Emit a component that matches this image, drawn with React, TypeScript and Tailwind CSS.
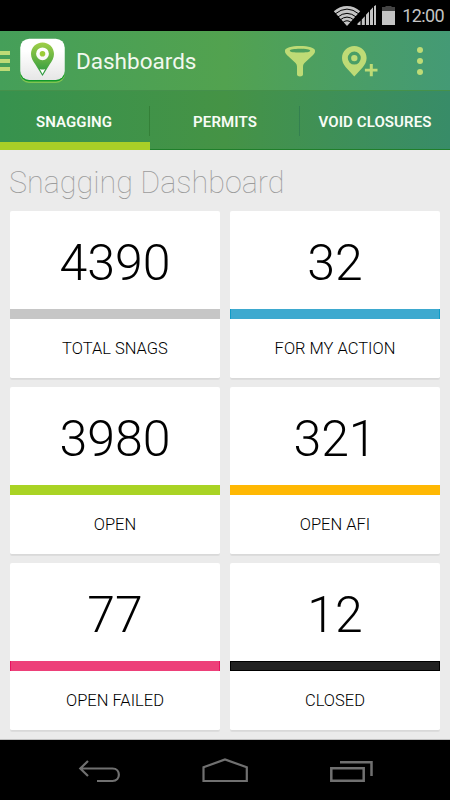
import type { ReactNode } from "react";

type Stat = {
  value: string;
  label: string;
  bar: string;
};

const stats: Stat[] = [
  { value: "4390", label: "TOTAL SNAGS", bar: "bg-[#c6c6c6]" },
  { value: "32", label: "FOR MY ACTION", bar: "bg-[#3da9cf] border-x border-[#0e9bc8]" },
  { value: "3980", label: "OPEN", bar: "bg-[#a9d324]" },
  { value: "321", label: "OPEN AFI", bar: "bg-[#ffb803]" },
  { value: "77", label: "OPEN FAILED", bar: "bg-[#ed4079] border-x border-[#e6125f]" },
  { value: "12", label: "CLOSED", bar: "bg-[#222222] border border-black" },
];

function StatusBar() {
  return (
    <div className="flex h-[31px] items-start justify-end bg-black pr-[6px] text-[#c4c4c4]">
      <svg className="mt-[5px] h-[21px] w-[44px]" viewBox="0 0 44 21" fill="currentColor">
        <path d="M0.8 6.2C8.5-0.8 19.5-0.8 27.2 6.2L14 21Z" />
        <g fill="none" stroke="#000" strokeWidth="1">
          <path d="M2 9Q14 -0.8 26 9" />
          <path d="M4.5 12.2Q14 4.5 23.5 12.2" />
          <path d="M7 15Q14 9.2 21 15" />
          <path d="M9.8 17.5Q14 14 18.2 17.500" />
        </g>
        <path d="M24.5 20v-1.5l3-2.8V20zM28.800 20v-5.600l3-3.200V20zM33 20V9.800l3-3.200V20zM37 20V5.500l3-3.200V20zM41 20V1.300L43 0v20z" />
      </svg>
      <svg className="mt-[6px] ml-[5px] h-[19px] w-[13px]" viewBox="0 0 13 19">
        <path fill="#444" d="M0 1h3.5V0h6v1H13v4H0z" />
        <path fill="#c4c4c4" d="M0 5h13v14H0z" />
      </svg>
      <span className="ml-[7px] pt-[4px] text-[18px] leading-[24px] tracking-[-0.6px]">12:00</span>
    </div>
  );
}

function AppLogo() {
  return (
    <svg className="ml-[9px] h-[46px] w-[47px]" viewBox="0 0 47 46">
      <defs>
        <linearGradient id="tile" x1="0" y1="0" x2="0" y2="1">
          <stop offset="0.3" stopColor="#fff" />
          <stop offset="1" stopColor="#e6e6e6" />
        </linearGradient>
        <linearGradient id="pin" x1="0" y1="0" x2="0" y2="1">
          <stop offset="0" stopColor="#a0cf48" />
          <stop offset="1" stopColor="#26963f" />
        </linearGradient>
      </defs>
      <rect x="1" y="4" width="45" height="41" rx="9" fill="#7fc452" />
      <rect x="1" y="1" width="45" height="42.5" rx="9" fill="#10992a" />
      <rect x="1.2" y="0.7" width="44.6" height="41.3" rx="9" fill="url(#tile)" />
      <path
        fill="url(#pin)"
        fillRule="evenodd"
        d="M23.5 4.5C17 4.5 12 9.5 12 16c0 4 2 7 4.400 10.500L23.500 38l7.100-11.500C33 23 35 20 35 16c0-6.500-5-11.500-11.500-11.500zM23.500 9.400a6.400 6.400 0 1 1 0 12.800a6.400 6.400 0 0 1 0-12.800z"
      />
      <circle cx="23.500" cy="15.800" r="2.800" fill="#9bcc38" />
      <path fill="#fff" d="M20.800 31q2.700 1.200 5.400 0L23.500 36z" />
    </svg>
  );
}

function ActionBar() {
  return (
    <header className="flex h-[59px] items-start bg-linear-to-r from-[#459f59] via-[#52a24f] to-[#449a75] pr-[27px] text-[#bedb76]">
      <div className="mt-[20px] flex w-[10px] flex-col gap-[4px]">
        <span className="h-[4px] bg-current" />
        <span className="h-[4px] bg-current" />
        <span className="h-[4px] bg-current" />
      </div>
      <div className="mt-[7px]">
        <AppLogo />
      </div>
      <h1 className="mt-[14px] ml-[10px] flex-1 text-[22.5px] leading-[32px] text-[#f1f8ee]">Dashboards</h1>
      <svg className="mt-[15px] h-[31px] w-[30px]" viewBox="0 0 30 31" fill="currentColor">
        <path
          fillRule="evenodd"
          d="M15 0C6.500 0 0 1.800 0 4.500v1c0 1.500 1.500 3 3 4.500l7 6.500c1.500 1.400 2 2.500 2 4.500v7.500c0 2.500 6 2.500 6 0V21c0-2 .5-3.100 2-4.500l7-6.500c1.500-1.500 3-3 3-4.500v-1C30 1.800 23.500 0 15 0zm0 2.800c5.700 0 10.200.7 10.200 1.900S20.700 6.600 15 6.600 4.800 5.900 4.800 4.700 9.300 2.800 15 2.800z"
        />
      </svg>
      <svg className="mt-[15px] ml-[27px] h-[31px] w-[36px]" viewBox="0 0 36 31" fill="currentColor">
        <path
          fillRule="evenodd"
          d="M12.300 0C5.500 0 0 5.300 0 12c0 3.500 1.500 6.500 3.800 9.200L12.300 30.500l8.500-9.300c2.300-2.700 3.800-5.700 3.800-9.200C24.600 5.300 19.100 0 12.300 0zm0 5.600a6.500 6.500 0 1 1 0 13a6.500 6.500 0 0 1 0-13z"
        />
        <circle cx="12.300" cy="12.100" r="3.200" />
        <path d="M27.800 18h3v4.700h4.700v2.700h-4.700v4.800h-3v-4.800h-4.900v-2.700h4.900z" />
      </svg>
      <div className="mt-[16px] ml-[39px] flex flex-col items-center gap-[5px]">
        <span className="size-[6px] rounded-full bg-current" />
        <span className="size-[6px] rounded-full bg-current" />
        <span className="size-[6px] rounded-full bg-current" />
      </div>
    </header>
  );
}

function Tab({ active, children }: { active?: boolean; children: ReactNode }) {
  return (
    <div
      className={
        active
          ? "flex h-full w-[150px] items-center justify-center border-b-8 border-[#a9cf27] pt-[12px] pr-[2px]"
          : "flex h-full w-[150px] items-center justify-center border-b border-[#1f7f2a] pt-[5px]"
      }
    >
      {children}
    </div>
  );
}

function Tabs() {
  return (
    <nav className="relative flex h-[60px] border-t border-[#45914b] bg-linear-to-r from-[#37924e] via-[#459345] to-[#388c68] text-[15px] font-semibold tracking-[0.1px] text-[#f8fcf6]">
      <Tab active>SNAGGING</Tab>
      <Tab>PERMITS</Tab>
      <Tab>VOID CLOSURES</Tab>
      <span className="absolute top-[15px] left-[149px] h-[30px] w-px bg-[#348038]" />
      <span className="absolute top-[15px] left-[299px] h-[30px] w-px bg-[#348050]" />
    </nav>
  );
}

function StatCard({ value, label, bar }: Stat) {
  return (
    <div className="flex h-[168px] flex-col rounded-[2px] border-b border-[#d9d9d9] bg-white text-center text-black shadow-[0_1px_0_#dddddd]">
      <div className="h-[98px] pt-[22px] text-[50px] leading-[60px] font-light">{value}</div>
      <div className={`h-[10px] shrink-0 ${bar}`} />
      <div className="pt-[18px] text-[16.5px] leading-[24px] font-light">{label}</div>
    </div>
  );
}

function NavBar() {
  return (
    <footer className="flex h-[60px] items-start bg-black pt-[18px] pl-[78px] text-[#707070]">
      <svg className="h-[26px] w-[43px]" viewBox="0 0 43 26" fill="none" stroke="currentColor" strokeWidth="2.200">
        <path d="M10 3L2.300 10.500L10 18M2.500 10.500H34.500C43 10.500 43 23 34.500 23H19" />
      </svg>
      <svg className="ml-[80px] h-[26px] w-[48px]" viewBox="0 0 48 26" fill="none" stroke="currentColor" strokeWidth="2.200">
        <path d="M2.500 23V9.300L24 1.500L45.800 9.300V23z" />
      </svg>
      <svg className="ml-[80px] h-[26px] w-[45px]" viewBox="0 0 45 26" fill="none" stroke="currentColor" strokeWidth="2.500">
        <path d="M2.300 10.300H34.700V22.800H2.300zM11 4.300H42.500V18" />
      </svg>
    </footer>
  );
}

export default function App() {
  return (
    <div className="flex h-[800px] w-[450px] flex-col overflow-hidden bg-[#ebebeb] font-[Roboto,sans-serif]">
      <StatusBar />
      <ActionBar />
      <Tabs />
      <main className="h-[590px] border-b border-[#c0c0c0] px-[10px]">
        <h2 className="-ml-px h-[61px] pt-[13px] text-[30.5px] leading-[40px] font-thin text-[#9c9c9c]">
          Snagging Dashboard
        </h2>
        <div className="grid grid-cols-2 gap-x-[10px] gap-y-[8px]">
          {stats.map((stat) => (
            <StatCard key={stat.label} {...stat} />
          ))}
        </div>
      </main>
      <NavBar />
    </div>
  );
}
